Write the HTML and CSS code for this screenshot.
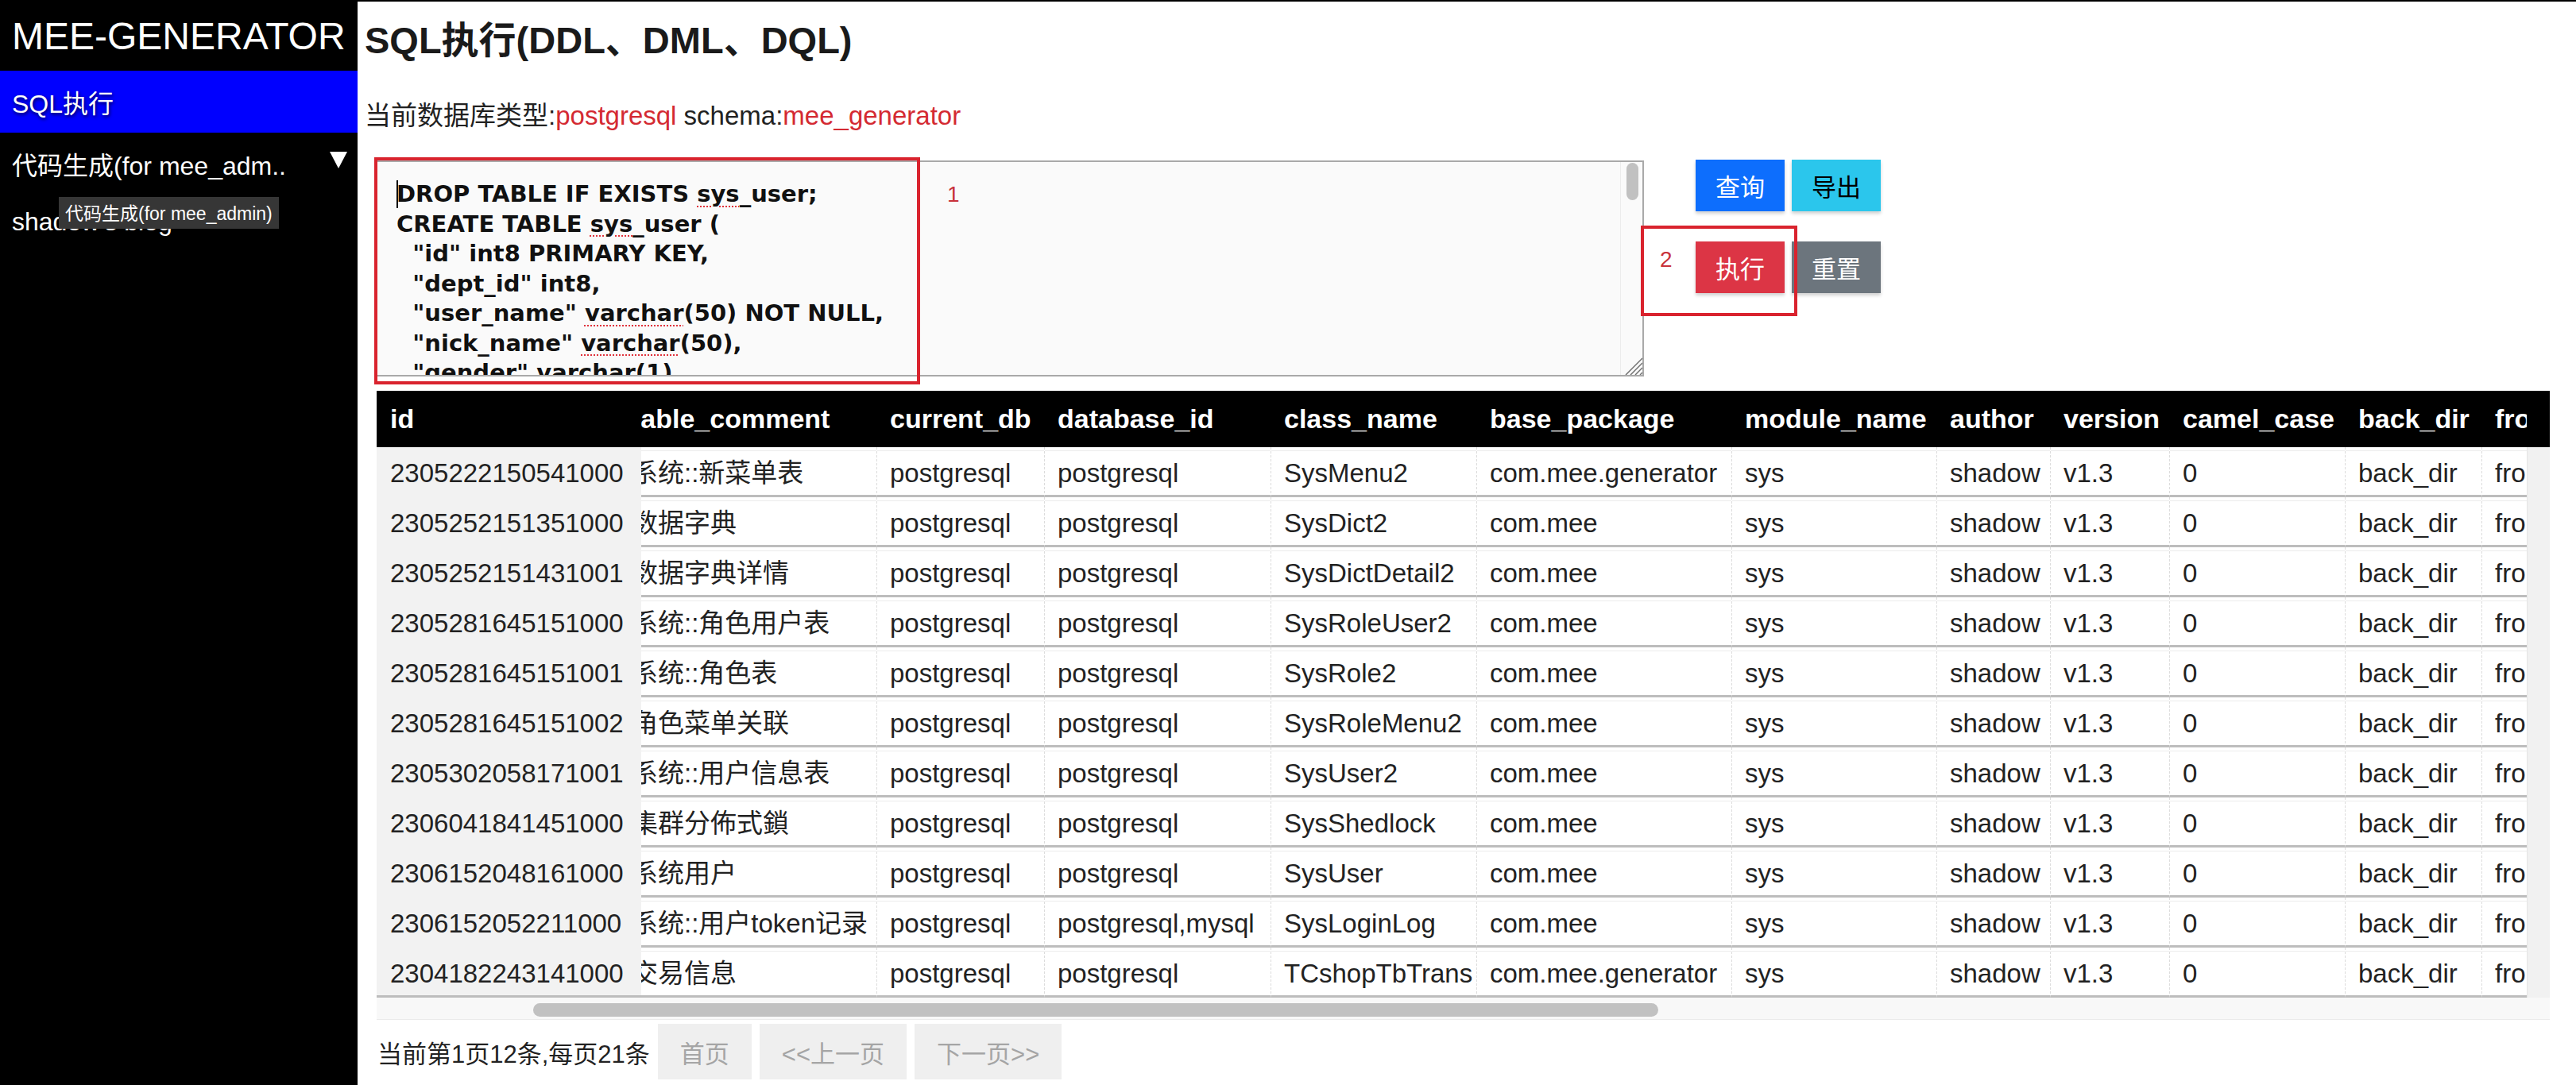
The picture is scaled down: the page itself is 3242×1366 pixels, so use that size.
FILE: index.html
```html
<!DOCTYPE html>
<html lang="zh-CN">
<head>
<meta charset="utf-8">
<title>MEE-GENERATOR</title>
<link rel="stylesheet" href="styles.css">
</head>
<body>
<div class="app">
  <aside class="sidebar">
    <div class="logo">MEE-GENERATOR</div>
    <nav class="menu">
      <div class="menu-item active">SQL执行</div>
      <div class="menu-item has-sub"><span class="label">代码生成(for mee_adm..</span><svg class="caret-down" width="22" height="21" viewBox="0 0 22 21"><polygon points="0,0 22,0 11,21" fill="#fff"/></svg></div>
      <div class="menu-item">shadow's blog</div>
    </nav>
    <div class="tooltip">代码生成(for mee_admin)</div>
  </aside>

  <main class="main">
    <h1 class="title">SQL执行(DDL、DML、DQL)</h1>
    <p class="db-info">当前数据库类型:<span class="hl">postgresql</span> schema:<span class="hl">mee_generator</span></p>

    <section class="editor-row">
      <div class="editor">
<pre class="code">DROP TABLE IF EXISTS <span class="sp">sys</span>_user;
CREATE TABLE <span class="sp">sys</span>_user (
  "id" int8 PRIMARY KEY,
  "dept_id" int8,
  "user_name" <span class="sp">varchar</span>(50) NOT NULL,
  "nick_name" <span class="sp">varchar</span>(50),
  "gender" <span class="sp">varchar</span>(1),
  "avatar" <span class="sp">varchar</span>(100),
  "email" <span class="sp">varchar</span>(50)
);</pre>
        <span class="text-caret"></span>
        <div class="scroll-track"><div class="scroll-thumb"></div></div>
        <svg class="grip" width="24" height="24" viewBox="0 0 24 24"><g stroke="#707070" stroke-width="1.5"><line x1="24" y1="3" x2="3" y2="24"/><line x1="24" y1="9" x2="9" y2="24"/><line x1="24" y1="15" x2="15" y2="24"/><line x1="24" y1="21" x2="21" y2="24"/></g></svg>
      </div>
      <div class="actions">
        <div class="btn-row">
          <button class="btn btn-primary">查询</button>
          <button class="btn btn-info">导出</button>
        </div>
        <div class="btn-row">
          <button class="btn btn-danger">执行</button>
          <button class="btn btn-secondary">重置</button>
        </div>
      </div>
      <div class="mark mark-1"></div>
      <span class="mark-num num-1">1</span>
      <div class="mark mark-2"></div>
      <span class="mark-num num-2">2</span>
    </section>

    <section class="table-area">
      <div class="grid">
        <div class="viewport">
          <table class="data">
            <colgroup>
              <col class="w-id"><col class="w-comment"><col class="w-cdb"><col class="w-dbid"><col class="w-class"><col class="w-pkg"><col class="w-module"><col class="w-author"><col class="w-version"><col class="w-camel"><col class="w-back"><col class="w-front">
            </colgroup>
            <thead>
              <tr>
                <th class="id">id</th>
                <th class="comment"><span class="cut">table_comment</span></th>
                <th>current_db</th>
                <th>database_id</th>
                <th>class_name</th>
                <th>base_package</th>
                <th>module_name</th>
                <th>author</th>
                <th>version</th>
                <th>camel_case</th>
                <th>back_dir</th>
                <th>front_dir</th>
              </tr>
            </thead>
            <tbody>
              <tr><td class="id">2305222150541000</td><td class="comment"><span class="cut">系统::新菜单表</span></td><td>postgresql</td><td>postgresql</td><td>SysMenu2</td><td>com.mee.generator</td><td>sys</td><td>shadow</td><td>v1.3</td><td>0</td><td>back_dir</td><td>front_dir</td></tr>
              <tr><td class="id">2305252151351000</td><td class="comment"><span class="cut">数据字典</span></td><td>postgresql</td><td>postgresql</td><td>SysDict2</td><td>com.mee</td><td>sys</td><td>shadow</td><td>v1.3</td><td>0</td><td>back_dir</td><td>front_dir</td></tr>
              <tr><td class="id">2305252151431001</td><td class="comment"><span class="cut">数据字典详情</span></td><td>postgresql</td><td>postgresql</td><td>SysDictDetail2</td><td>com.mee</td><td>sys</td><td>shadow</td><td>v1.3</td><td>0</td><td>back_dir</td><td>front_dir</td></tr>
              <tr><td class="id">2305281645151000</td><td class="comment"><span class="cut">系统::角色用户表</span></td><td>postgresql</td><td>postgresql</td><td>SysRoleUser2</td><td>com.mee</td><td>sys</td><td>shadow</td><td>v1.3</td><td>0</td><td>back_dir</td><td>front_dir</td></tr>
              <tr><td class="id">2305281645151001</td><td class="comment"><span class="cut">系统::角色表</span></td><td>postgresql</td><td>postgresql</td><td>SysRole2</td><td>com.mee</td><td>sys</td><td>shadow</td><td>v1.3</td><td>0</td><td>back_dir</td><td>front_dir</td></tr>
              <tr><td class="id">2305281645151002</td><td class="comment"><span class="cut">角色菜单关联</span></td><td>postgresql</td><td>postgresql</td><td>SysRoleMenu2</td><td>com.mee</td><td>sys</td><td>shadow</td><td>v1.3</td><td>0</td><td>back_dir</td><td>front_dir</td></tr>
              <tr><td class="id">2305302058171001</td><td class="comment"><span class="cut">系统::用户信息表</span></td><td>postgresql</td><td>postgresql</td><td>SysUser2</td><td>com.mee</td><td>sys</td><td>shadow</td><td>v1.3</td><td>0</td><td>back_dir</td><td>front_dir</td></tr>
              <tr><td class="id">2306041841451000</td><td class="comment"><span class="cut">集群分佈式鎖</span></td><td>postgresql</td><td>postgresql</td><td>SysShedlock</td><td>com.mee</td><td>sys</td><td>shadow</td><td>v1.3</td><td>0</td><td>back_dir</td><td>front_dir</td></tr>
              <tr><td class="id">2306152048161000</td><td class="comment"><span class="cut">系统用户</span></td><td>postgresql</td><td>postgresql</td><td>SysUser</td><td>com.mee</td><td>sys</td><td>shadow</td><td>v1.3</td><td>0</td><td>back_dir</td><td>front_dir</td></tr>
              <tr><td class="id">2306152052211000</td><td class="comment"><span class="cut">系统::用户token记录</span></td><td>postgresql</td><td>postgresql,mysql</td><td>SysLoginLog</td><td>com.mee</td><td>sys</td><td>shadow</td><td>v1.3</td><td>0</td><td>back_dir</td><td>front_dir</td></tr>
              <tr class="last"><td class="id">2304182243141000</td><td class="comment"><span class="cut">交易信息</span></td><td>postgresql</td><td>postgresql</td><td>TCshopTbTrans</td><td>com.mee.generator</td><td>sys</td><td>shadow</td><td>v1.3</td><td>0</td><td>back_dir</td><td>front_dir</td></tr>
            </tbody>
          </table>
        </div>
        <div class="vbar"><div class="vbar-head"></div><div class="vbar-track"></div></div>
      </div>
      <div class="hbar"><div class="hthumb"></div></div>
    </section>

    <nav class="pager">
      <span class="pager-text">当前第1页12条,每页21条</span>
      <button class="pager-btn">首页</button>
      <button class="pager-btn">&lt;&lt;上一页</button>
      <button class="pager-btn">下一页&gt;&gt;</button>
    </nav>
  </main>
</div>
</body>
</html>
```

FILE: styles.css
```css
* { box-sizing: border-box; }
html, body { margin: 0; padding: 0; }
body {
  font-family: "Liberation Sans", "Noto Sans CJK SC", sans-serif;
  background: #fff;
  color: #222;
  border-top: 2px solid #000;
  overflow: hidden;
}
.app { display: flex; height: 1364px; }

/* ---------- sidebar ---------- */
.sidebar {
  width: 450px;
  flex: none;
  background: #000;
  color: #fff;
  position: relative;
}
.logo {
  font-size: 48px;
  line-height: 52px;
  padding: 18px 0 17px 15px;
  white-space: nowrap;
}
.menu-item {
  height: 70px;
  font-size: 32px;
  line-height: 44px;
  padding: 20px 13px 6px 15px;
  display: flex;
  justify-content: space-between;
  align-items: flex-start;
  white-space: nowrap;
}
.menu-item.active {
  height: 78px;
  background: #0000ff;
  text-shadow: 1px 2px 4px rgba(0, 0, 0, 0.75);
}
.caret-down { margin-top: 4px; flex: none; }
.tooltip {
  position: absolute;
  left: 74px;
  top: 246px;
  background: #363636;
  color: #fff;
  font-size: 23px;
  line-height: 38px;
  padding: 2px 8px 0 8px;
  white-space: nowrap;
}

/* ---------- main ---------- */
.main {
  flex: 1;
  min-width: 0;
  padding: 22px 0 0 9px;
}
.title {
  margin: 0;
  font-size: 47px;
  line-height: 54px;
  font-weight: bold;
  color: #1a1a1a;
  white-space: nowrap;
}
.db-info {
  margin: 48px 0 0;
  font-size: 33px;
  line-height: 40px;
  color: #222;
  white-space: nowrap;
}
.hl { color: #d42a32; }

/* ---------- editor ---------- */
.editor-row {
  position: relative;
  display: flex;
  align-items: flex-start;
  margin: 36px 0 0 14px;
}
.editor {
  position: relative;
  width: 1596px;
  height: 272px;
  flex: none;
  border: 2px solid #a9a9a9;
  background: #fafafa;
  overflow: hidden;
}
.code {
  margin: 0;
  padding: 22px 0 0 24px;
  font-family: "DejaVu Sans", sans-serif;
  font-weight: bold;
  font-size: 29px;
  line-height: 37.5px;
  color: #111;
  white-space: pre;
}
.sp {
  text-decoration: underline dotted #e0333c;
  text-decoration-thickness: 2px;
  text-underline-offset: 5px;
}
.text-caret {
  position: absolute;
  left: 24px;
  top: 23px;
  width: 2px;
  height: 35px;
  background: #000;
}
.scroll-track {
  position: absolute;
  right: 0;
  top: 0;
  bottom: 0;
  width: 28px;
  background: #fafafa;
  border-left: 1px solid #ececec;
}
.scroll-thumb {
  margin: 1px 0 0 7px;
  width: 15px;
  height: 47px;
  border-radius: 8px;
  background: #c1c1c1;
}
.grip { position: absolute; right: 0; bottom: 0; }

.actions {
  display: flex;
  flex-direction: column;
  gap: 38px;
  margin: -1px 0 0 65px;
}
.btn-row { display: flex; gap: 9px; }
.btn {
  width: 112px;
  height: 65px;
  padding: 0;
  border: 0;
  border-radius: 0;
  font-family: "Liberation Sans", "Noto Sans CJK SC", sans-serif;
  font-size: 31px;
  color: #fff;
  box-shadow: 0 3px 4px rgba(0, 0, 0, 0.18);
}
.btn-primary { background: #0d6efd; }
.btn-info { background: #2bc6ec; color: #000; }
.btn-danger { background: #dc3545; }
.btn-secondary { background: #6c757d; }

.mark {
  position: absolute;
  border: 4px solid #d9232e;
}
.mark-1 { left: -2px; top: -4px; width: 687px; height: 286px; }
.mark-2 { left: 1592px; top: 82px; width: 197px; height: 114px; }
.mark-num {
  position: absolute;
  font-size: 28px;
  line-height: 28px;
  color: #c8323b;
}
.num-1 { left: 719px; top: 29px; }
.num-2 { left: 1616px; top: 111px; }

/* ---------- table ---------- */
.table-area {
  margin: 18px 0 0 15px;
  width: 2735px;
}
.grid { display: flex; }
.viewport {
  width: 2706px;
  flex: none;
  overflow: hidden;
}
.vbar {
  width: 29px;
  flex: none;
  display: flex;
  flex-direction: column;
}
.vbar-head { height: 71px; background: #000; }
.vbar-track { flex: 1; background: #f1f1f1; border-left: 1px solid #e4e4e4; }

.data {
  border-collapse: separate;
  border-spacing: 0;
  table-layout: fixed;
  width: 2899px;
  font-size: 33px;
}
.w-id { width: 333px; }
.w-comment { width: 296px; }
.w-cdb { width: 211px; }
.w-dbid { width: 285px; }
.w-class { width: 259px; }
.w-pkg { width: 321px; }
.w-module { width: 258px; }
.w-author { width: 143px; }
.w-version { width: 150px; }
.w-camel { width: 221px; }
.w-back { width: 172px; }
.w-front { width: 250px; }

.data th {
  height: 71px;
  padding: 0 16px;
  line-height: 71px;
  background: #000;
  color: #fff;
  font-size: 34px;
  font-weight: bold;
  text-align: left;
  white-space: nowrap;
  overflow: hidden;
  border-left: 1px solid #000;
}
.data td {
  padding: 11px 16px 6px;
  line-height: 43px;
  color: #222;
  white-space: nowrap;
  overflow: hidden;
  border-left: 1px dashed #dcdcdc;
  border-bottom: 3px solid #bdbdbd;
  background: linear-gradient(#ececec, #ececec) 0 4px / 100% 1px no-repeat, #fff;
}
.data th.id, .data td.id {
  position: relative;
  z-index: 1;
  border-left: 0;
  padding-left: 17px;
}
.data td.id {
  background: #f2f2f2;
  border-bottom-color: #f2f2f2;
}
.data tr.last td.id { border-bottom-color: #bdbdbd; }
.data th.comment, .data td.comment { border-left: 0; }
.cut { margin-left: -28px; }

.hbar {
  height: 28px;
  padding-top: 7px;
  background: #f8f8f8;
  border-bottom: 1px solid #ebebeb;
}
.hthumb {
  margin-left: 197px;
  width: 1416px;
  height: 17px;
  border-radius: 9px;
  background: #c1c1c1;
}

/* ---------- pager ---------- */
.pager {
  display: flex;
  align-items: center;
  gap: 10px;
  height: 70px;
  margin: 5px 0 0 16px;
  font-size: 31px;
  color: #222;
}
.pager-text { white-space: nowrap; }
.pager-btn {
  height: 70px;
  padding: 0 28px;
  border: 0;
  background: #efefef;
  color: #a5a5a5;
  font-family: "Liberation Sans", "Noto Sans CJK SC", sans-serif;
  font-size: 31px;
  white-space: nowrap;
}
```
